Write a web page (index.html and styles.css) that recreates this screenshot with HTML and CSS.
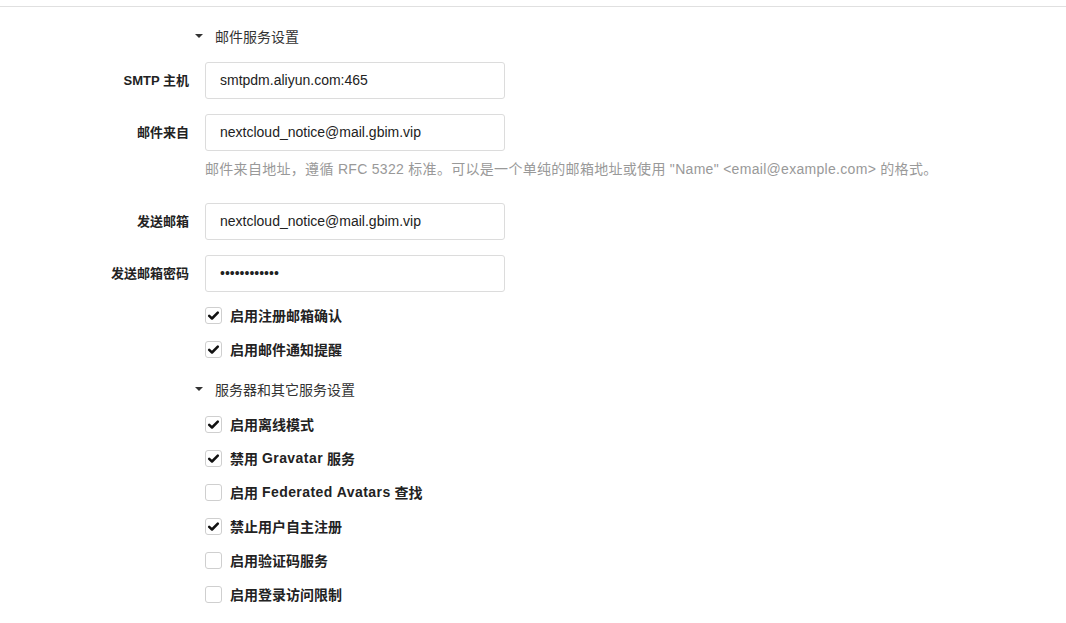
FILE: index.html
```html
<!DOCTYPE html>
<html lang="zh-CN">
<head>
<meta charset="utf-8">
<title>邮件服务设置</title>
<link rel="stylesheet" href="styles.css">
</head>
<body>
<div class="topbar"></div>
<main class="content">
  <div class="section-title"><span class="caret"></span>邮件服务设置</div>

  <div class="field">
    <label class="label">SMTP 主机</label>
    <input class="input" type="text" value="smtpdm.aliyun.com:465">
  </div>
  <div class="field">
    <label class="label">邮件来自</label>
    <input class="input" type="text" value="nextcloud_notice@mail.gbim.vip">
  </div>
  <div class="hint">邮件来自地址，遵循 RFC 5322 标准。可以是一个单纯的邮箱地址或使用 "Name" &lt;email@example.com&gt; 的格式。</div>
  <div class="field">
    <label class="label">发送邮箱</label>
    <input class="input" type="text" value="nextcloud_notice@mail.gbim.vip">
  </div>
  <div class="field">
    <label class="label">发送邮箱密码</label>
    <input class="input" type="password" value="xxxxxxxxxxxx">
  </div>

  <div class="checks first">
    <div class="check"><span class="box on"><svg viewBox="0 0 16 16"><path d="M3.4 8.4 L6.4 11.2 L12.6 4.9"/></svg></span>启用注册邮箱确认</div>
    <div class="check"><span class="box on"><svg viewBox="0 0 16 16"><path d="M3.4 8.4 L6.4 11.2 L12.6 4.9"/></svg></span>启用邮件通知提醒</div>
  </div>

  <div class="section-title second"><span class="caret"></span>服务器和其它服务设置</div>

  <div class="checks">
    <div class="check"><span class="box on"><svg viewBox="0 0 16 16"><path d="M3.4 8.4 L6.4 11.2 L12.6 4.9"/></svg></span>启用离线模式</div>
    <div class="check"><span class="box on"><svg viewBox="0 0 16 16"><path d="M3.4 8.4 L6.4 11.2 L12.6 4.9"/></svg></span>禁用 <span class="lat">Gravatar</span> 服务</div>
    <div class="check"><span class="box"></span>启用 <span class="lat">Federated Avatars</span> 查找</div>
    <div class="check"><span class="box on"><svg viewBox="0 0 16 16"><path d="M3.4 8.4 L6.4 11.2 L12.6 4.9"/></svg></span>禁止用户自主注册</div>
    <div class="check"><span class="box"></span>启用验证码服务</div>
    <div class="check"><span class="box"></span>启用登录访问限制</div>
  </div>
</main>
</body>
</html>
```
FILE: styles.css
```css
html, body {
  margin: 0;
  padding: 0;
  background: #fff;
}
body {
  font-family: "Liberation Sans", "Noto Sans CJK SC", sans-serif;
  color: #333;
  font-size: 14px;
}
.topbar {
  height: 6px;
  border-bottom: 1px solid #e0e0e0;
}
.content {
  padding-top: 19px;
}
.section-title {
  display: flex;
  align-items: center;
  height: 20px;
  margin-left: 195px;
  font-size: 14px;
  color: #333;
  margin-bottom: 16px;
}
.section-title.second {
  margin-top: 20px;
  margin-bottom: 15px;
}
.caret {
  width: 0;
  height: 0;
  border-left: 4px solid transparent;
  border-right: 4px solid transparent;
  border-top: 4px solid #333;
  margin-right: 12px;
  margin-top: -1px;
}
.field {
  display: flex;
  align-items: center;
  gap: 16px;
  margin-bottom: 15px;
}
.label {
  width: 189px;
  text-align: right;
  font-size: 13px;
  font-weight: bold;
  color: #222;
  padding-bottom: 3px;
}
.input {
  box-sizing: border-box;
  width: 300px;
  height: 37px;
  margin: 0;
  padding: 0 14px 2px;
  border: 1px solid #dcdcdc;
  border-radius: 3px;
  font-family: "Liberation Sans", "Noto Sans CJK SC", sans-serif;
  font-size: 14px;
  color: #222;
  background: #fff;
  outline: none;
}
.hint {
  margin: -6px 0 25px 205px;
  height: 18px;
  line-height: 18px;
  font-size: 14px;
  letter-spacing: 0.3px;
  color: #999;
  white-space: nowrap;
}
.checks {
  display: flex;
  flex-direction: column;
  gap: 14px;
  margin-left: 205px;
}
.checks.first {
  margin-top: -2px;
}
.check {
  display: flex;
  align-items: center;
  height: 20px;
  font-size: 14px;
  font-weight: bold;
  color: #222;
  white-space: pre;
}
.lat {
  letter-spacing: 0.45px;
}
.box {
  box-sizing: border-box;
  width: 17px;
  height: 17px;
  border: 1px solid #cfcfcf;
  border-radius: 3px;
  margin-right: 8px;
  display: flex;
  align-items: center;
  justify-content: center;
  background: #fff;
}
.box svg {
  width: 15px;
  height: 15px;
}
.box svg path {
  fill: none;
  stroke: #111;
  stroke-width: 2.7;
  stroke-linecap: round;
  stroke-linejoin: round;
}
```
